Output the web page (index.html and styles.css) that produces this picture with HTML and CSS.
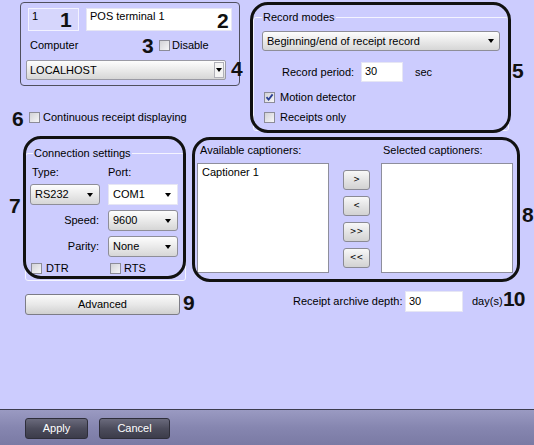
FILE: index.html
```html
<!DOCTYPE html>
<html>
<head>
<meta charset="utf-8">
<link rel="stylesheet" href="styles.css">
</head>
<body>
<div class="dialog">
  <div class="top">
    <div class="leftcol">
      <div class="panel">
        <div class="prow">
          <div class="edit id">1</div>
          <div class="edit name">POS terminal 1</div>
        </div>
        <div class="prow2">
          <span class="computer">Computer</span>
          <span class="chk"></span><span class="chktext">Disable</span>
        </div>
        <div class="combo host"><span class="ctext">LOCALHOST</span><span class="ddbox"><span class="arrow"></span></span></div>
      </div>
      <div class="cont"><span class="chk"></span><span class="chktext2">Continuous receipt displaying</span></div>
    </div>
    <fieldset class="group record">
      <legend>Record modes</legend>
      <div class="combo mode"><span class="ctext">Beginning/end of receipt record</span><span class="arrow"></span></div>
      <div class="period">
        <span class="plabel">Record period:</span>
        <div class="edit small">30</div>
        <span class="unit">sec</span>
      </div>
      <div class="chkrow first"><span class="chk checked"><svg width="9" height="9" viewBox="0 0 9 9"><path d="M1.5 4.2 L3.6 6.6 L7.6 1.4" fill="none" stroke="#2a3f95" stroke-width="1.8"/></svg></span><span class="chktext3">Motion detector</span></div>
      <div class="chkrow second"><span class="chk"></span><span class="chktext3">Receipts only</span></div>
    </fieldset>
  </div>

  <div class="mid">
    <fieldset class="group conn">
      <legend>Connection settings</legend>
      <div class="clabels"><span class="ltype">Type:</span><span>Port:</span></div>
      <div class="crow first">
        <div class="combo cbox"><span class="ctext">RS232</span><span class="arrow"></span></div>
        <div class="combo cbox white"><span class="ctext">COM1</span><span class="arrow"></span></div>
      </div>
      <div class="crow">
        <span class="rlabel">Speed:</span>
        <div class="combo cbox"><span class="ctext">9600</span><span class="arrow"></span></div>
      </div>
      <div class="crow">
        <span class="rlabel">Parity:</span>
        <div class="combo cbox"><span class="ctext">None</span><span class="arrow"></span></div>
      </div>
      <div class="flags">
        <div class="flag dtr"><span class="chk"></span><span class="ftext">DTR</span></div>
        <div class="flag"><span class="chk"></span><span class="ftext rts">RTS</span></div>
      </div>
    </fieldset>

    <div class="capt">
      <div class="caplabels"><span class="avail">Available captioners:</span><span>Selected captioners:</span></div>
      <div class="lists">
        <div class="listbox"><div class="item">Captioner 1</div></div>
        <div class="movers">
          <div class="mbtn">&gt;</div>
          <div class="mbtn">&lt;</div>
          <div class="mbtn">&gt;&gt;</div>
          <div class="mbtn">&lt;&lt;</div>
        </div>
        <div class="listbox right"></div>
      </div>
    </div>
  </div>

  <div class="bottom">
    <div class="btn advanced">Advanced</div>
    <div class="depth">
      <span class="dlabel">Receipt archive depth:</span>
      <div class="edit dinput">30</div>
      <span class="dunit">day(s)</span>
    </div>
  </div>

  <div class="oval o5"></div>
  <div class="oval o7"></div>
  <div class="oval o8"></div>

  <span class="num n1">1</span>
  <span class="num n2">2</span>
  <span class="num n3">3</span>
  <span class="num n4">4</span>
  <span class="num n5">5</span>
  <span class="num n6">6</span>
  <span class="num n7">7</span>
  <span class="num n8">8</span>
  <span class="num n9">9</span>
  <span class="num n10">10</span>
</div>
<div class="footer">
  <div class="fbtn apply">Apply</div>
  <div class="fbtn cancel">Cancel</div>
</div>
</body>
</html>
```

FILE: styles.css
```css
html, body {
  margin: 0;
  padding: 0;
}
body {
  width: 534px;
  height: 445px;
  overflow: hidden;
  background: #ccccfe;
  font-family: "Liberation Sans", Arial, sans-serif;
  font-size: 11px;
  line-height: 13px;
  color: #000;
}
.dialog {
  position: relative;
  height: 409px;
}

/* generic controls */
.edit {
  box-sizing: border-box;
  background: #fff;
  border: 1px solid #e6e6f4;
  padding: 1px 3px 0;
  line-height: 13px;
}
.combo {
  box-sizing: border-box;
  display: flex;
  align-items: center;
  justify-content: space-between;
  height: 20px;
  padding: 0 6px 0 3px;
  border: 1px solid #8e8e98;
  border-radius: 3px;
  background: linear-gradient(#fdfdfd, #ececec 45%, #d6d6d6);
}
.combo.white {
  background: #fff;
  border-color: #e6e6f4;
  border-radius: 0;
}
.arrow {
  width: 0;
  height: 0;
  border-left: 3.5px solid transparent;
  border-right: 3.5px solid transparent;
  border-top: 4px solid #000;
}
.chk {
  box-sizing: border-box;
  display: inline-flex;
  align-items: center;
  justify-content: center;
  width: 11px;
  height: 11px;
  flex: none;
  border: 1px solid #8c8c98;
  background: linear-gradient(135deg, #d2d2d6, #f6f6f8);
}
.group {
  box-sizing: border-box;
  margin: 0;
  min-width: 0;
  border: 1px solid #f4f4ff;
  border-radius: 3px;
}
.group legend {
  padding: 0 1px;
  font-size: 11px;
  line-height: 13px;
}

/* top section */
.top {
  display: flex;
  height: 133px;
}
.leftcol {
  margin-left: 20px;
  width: 220px;
  padding-top: 2px;
}
.panel {
  box-sizing: border-box;
  height: 84px;
  border: 1px solid #50505e;
  border-radius: 4px;
  padding: 5px 0 0 5px;
}
.prow {
  display: flex;
  gap: 7px;
  margin-left: 2px;
}
.prow .edit {
  height: 23px;
}
.edit.id {
  width: 51px;
  background: #d6d6fc;
  border-color: #f2f2ff;
}
.edit.name {
  width: 146px;
}
.prow2 {
  display: flex;
  align-items: center;
  height: 15px;
  margin-top: 7px;
}
.computer {
  margin-left: 4px;
  width: 129px;
}
.chktext {
  margin-left: 2px;
}
.combo.host {
  width: 200px;
  margin-top: 7px;
  padding-right: 0;
  border-color: #9a9aa4;
  border-radius: 2px;
}
.ddbox {
  box-sizing: border-box;
  display: flex;
  align-items: center;
  justify-content: center;
  width: 10px;
  height: 16px;
  margin-right: 1px;
  background: #f4f4f4;
  border: 1px solid #b0b0b8;
}
.cont {
  display: flex;
  align-items: center;
  height: 15px;
  margin: 24px 0 0 9px;
}
.chktext2 {
  margin-left: 3px;
}

.record {
  width: 256px;
  height: 120px;
  margin: 11px 0 0 13px;
  padding: 0 0 0 8px;
}
.combo.mode {
  width: 238px;
  margin-top: 7px;
  padding-left: 4px;
  padding-right: 5px;
}
.period {
  display: flex;
  align-items: center;
  height: 20px;
  margin-top: 11px;
}
.plabel {
  margin-left: 20px;
  width: 79px;
}
.edit.small {
  width: 42px;
  height: 20px;
  padding-top: 2px;
}
.unit {
  margin-left: 12px;
}
.chkrow {
  display: flex;
  align-items: center;
  height: 13px;
  margin-left: 2px;
}
.chkrow.first {
  margin-top: 9px;
}
.chkrow.second {
  margin-top: 7px;
}
.chktext3 {
  margin-left: 5px;
}

/* middle section */
.mid {
  display: flex;
}
.conn {
  width: 161px;
  height: 134px;
  margin: 14px 0 0 25px;
  padding: 0 0 0 4px;
}
.conn legend {
  margin-left: 3px;
}
.clabels {
  display: flex;
  height: 12px;
  margin-top: 6px;
}
.ltype {
  margin-left: 2px;
  width: 76px;
}
.crow {
  display: flex;
  align-items: center;
  margin-top: 5px;
}
.crow.first {
  margin-top: 6px;
  gap: 8px;
}
.combo.cbox {
  width: 70px;
  height: 21px;
  padding-left: 4px;
}
.rlabel {
  box-sizing: border-box;
  width: 78px;
  padding-right: 9px;
  text-align: right;
}
.flags {
  display: flex;
  align-items: center;
  height: 13px;
  margin-top: 5px;
}
.flag {
  display: flex;
  align-items: center;
}
.flag.dtr {
  margin-left: 1px;
  width: 79px;
}
.ftext {
  margin-left: 4px;
}
.ftext.rts {
  margin-left: 3px;
}

.capt {
  margin-left: 11px;
  width: 316px;
}
.caplabels {
  display: flex;
  height: 12px;
  margin-top: 11px;
}
.avail {
  margin-left: 3px;
  width: 183px;
}
.lists {
  display: flex;
  margin-top: 7px;
}
.listbox {
  box-sizing: border-box;
  width: 132px;
  height: 110px;
  background: #fff;
  border: 1px solid #8e8e9c;
  padding: 2px 4px;
}
.item {
  line-height: 13px;
}
.movers {
  display: flex;
  flex-direction: column;
  gap: 6px;
  margin-left: 14px;
  padding-top: 7px;
  width: 27px;
}
.mbtn {
  box-sizing: border-box;
  height: 20px;
  border: 1px solid #8a8a94;
  border-radius: 3px;
  background: linear-gradient(#f8f8f8, #e4e4e4 50%, #d2d2d2);
  font-family: "DejaVu Sans", sans-serif;
  font-size: 8px;
  line-height: 18px;
  text-align: center;
}
.listbox.right {
  margin-left: 11px;
}

/* bottom */
.bottom {
  display: flex;
  align-items: flex-start;
  margin-top: 10px;
}
.btn {
  box-sizing: border-box;
  height: 21px;
  border: 1px solid #7c7c86;
  border-radius: 3px;
  background: linear-gradient(#fafafa, #e8e8e8 50%, #d0d0d0);
  text-align: center;
  line-height: 19px;
}
.advanced {
  width: 155px;
  margin: 3px 0 0 25px;
}
.depth {
  display: flex;
  align-items: center;
  height: 21px;
}
.dlabel {
  margin-left: 113px;
  width: 112px;
}
.dinput {
  width: 58px;
  height: 21px;
  padding-top: 3px;
}
.dunit {
  margin-left: 9px;
}

/* footer */
.footer {
  box-sizing: border-box;
  display: flex;
  height: 36px;
  padding: 8px 0 0 25px;
  border-top: 1px solid #3c3c4e;
  background: linear-gradient(#9a9ac2, #8686b0 50%, #7a7aa4);
}
.fbtn {
  box-sizing: border-box;
  height: 21px;
  border: 1px solid #2e2e3a;
  border-radius: 3px;
  background: linear-gradient(#6a6a7c, #4c4c5c 50%, #3c3c4a);
  color: #fff;
  text-align: center;
  line-height: 19px;
}
.apply {
  width: 63px;
}
.cancel {
  width: 71px;
  margin-left: 11px;
}

/* annotations over the dialog */
.oval {
  position: absolute;
  box-sizing: border-box;
  border: 3px solid #111;
  border-radius: 18px;
}
.o5 { left: 250px; top: 2px; width: 261px; height: 131px; }
.o7 { left: 23px; top: 136px; width: 163px; height: 143px; }
.o8 { left: 192px; top: 137px; width: 328px; height: 145px; }

.num {
  position: absolute;
  font-family: "Liberation Sans", Arial, sans-serif;
  font-weight: bold;
  font-size: 21px;
  line-height: 21px;
  color: #111;
}
.n1 { left: 60px; top: 9px; }
.n2 { left: 217px; top: 10px; }
.n3 { left: 142px; top: 35px; }
.n4 { left: 231px; top: 58px; }
.n5 { left: 512px; top: 60px; }
.n6 { left: 12px; top: 108px; }
.n7 { left: 9px; top: 195px; }
.n8 { left: 522px; top: 204px; }
.n9 { left: 183px; top: 292px; }
.n10 { left: 503px; top: 288px; letter-spacing: -1px; }
```
